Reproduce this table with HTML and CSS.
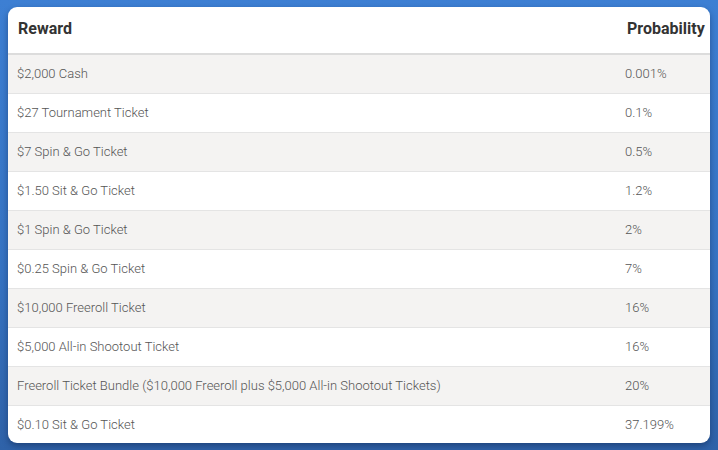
FILE: index.html
```html
<!DOCTYPE html>
<html>
<head>
<meta charset="utf-8">
<link rel="stylesheet" href="styles.css">
</head>
<body>
<div class="card">
  <table class="rewards">
    <thead>
      <tr><th class="c1">Reward</th><th class="c2">Probability</th></tr>
    </thead>
    <tbody>
      <tr><td>$2,000 Cash</td><td>0.001%</td></tr>
      <tr><td>$27 Tournament Ticket</td><td>0.1%</td></tr>
      <tr><td>$7 Spin &amp; Go Ticket</td><td>0.5%</td></tr>
      <tr><td>$1.50 Sit &amp; Go Ticket</td><td>1.2%</td></tr>
      <tr><td>$1 Spin &amp; Go Ticket</td><td>2%</td></tr>
      <tr><td>$0.25 Spin &amp; Go Ticket</td><td>7%</td></tr>
      <tr><td>$10,000 Freeroll Ticket</td><td>16%</td></tr>
      <tr><td>$5,000 All-in Shootout Ticket</td><td>16%</td></tr>
      <tr><td>Freeroll Ticket Bundle ($10,000 Freeroll plus $5,000 All-in Shootout Tickets)</td><td>20%</td></tr>
      <tr><td>$0.10 Sit &amp; Go Ticket</td><td>37.199%</td></tr>
    </tbody>
  </table>
</div>
</body>
</html>
```
FILE: styles.css
```css
html, body {
  margin: 0;
  padding: 0;
}
body {
  width: 718px;
  height: 450px;
  overflow: hidden;
  background: linear-gradient(180deg, #3d7fd3 0%, #3673c2 60%, #2f62a8 100%);
  font-family: Roboto, "Noto Sans", sans-serif;
  padding: 7px 8px 0 8px;
  box-sizing: border-box;
}
.card {
  width: 702px;
  height: 436px;
  background: #fff;
  border-radius: 9px;
  overflow: hidden;
  box-shadow: 0 3px 6px rgba(10, 30, 70, 0.45);
}
.rewards {
  width: 100%;
  border-collapse: collapse;
}
.rewards th {
  height: 42px;
  padding: 0 0 4px 10px;
  text-align: left;
  font-size: 16px;
  font-weight: 700;
  color: #333;
  border-bottom: 2px solid #dcdcdc;
}
.rewards th.c2 {
  width: 78px;
  padding: 0 5px 4px 2px;
}
.rewards td {
  height: 37px;
  padding: 0 0 1px 9px;
  font-size: 13px;
  font-weight: 300;
  color: #555;
  border-bottom: 1px solid #e4e4e4;
}
.rewards td + td {
  padding-left: 0;
}
.rewards tbody tr:nth-child(odd) {
  background: #f4f3f2;
}
.rewards tbody tr:last-child td {
  border-bottom: none;
}
```
